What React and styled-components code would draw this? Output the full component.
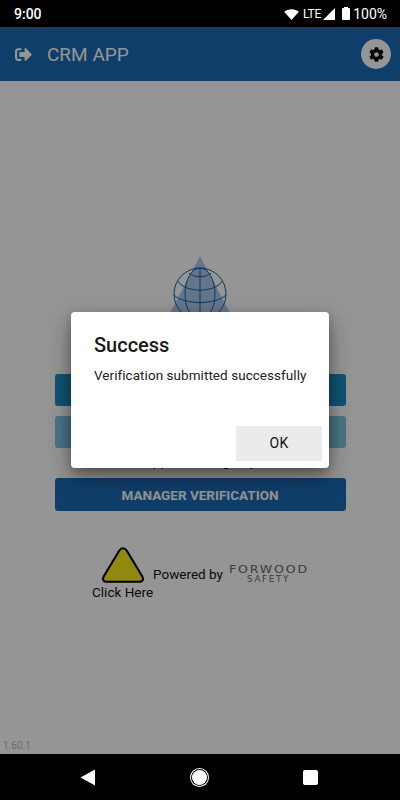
import React from "react";
import styled, { createGlobalStyle } from "styled-components";
import { FaCog, FaSignOutAlt } from "react-icons/fa";

const GlobalStyle = createGlobalStyle`
  html, body { margin: 0; padding: 0; background: #000; }
  * { box-sizing: border-box; }
  body { font-family: Roboto, "Liberation Sans", sans-serif; }
`;

export default function App() {
  return (
    <Screen>
      <GlobalStyle />
      <StatusBar>
        <Clock>9:00</Clock>
        <StatusIcons>
          <svg width="15" height="11" viewBox="0 0 16 12">
            <path d="M0 3 C4 -0.8 12 -0.8 16 3 L8 12 Z" fill="#fff" />
          </svg>
          <Lte>LTE</Lte>
          <svg width="12" height="12" viewBox="0 0 12 12">
            <path d="M12 0 V12 H0 Z" fill="#fff" />
          </svg>
          <Battery />
          <Percent>100%</Percent>
        </StatusIcons>
      </StatusBar>

      <Body>
        <Header>
          <HeaderLeft>
            <FaSignOutAlt size={17} />
            <Title>CRM APP</Title>
          </HeaderLeft>
          <GearButton>
            <FaCog size={15} />
          </GearButton>
        </Header>

        <Main>
          <Logo viewBox="-2 0 64 84">
            <path d="M30 0 L61.6 60 H-1.6 Z" fill="#aecbea" />
            <g fill="none" stroke="#0f5cb0" strokeWidth="1">
              <circle cx="30" cy="38" r="26" />
              <ellipse cx="30" cy="38" rx="15" ry="26" />
              <path d="M30 12 V64" />
              <path d="M19 17 C24 22 36 22 41 17" />
              <path d="M8 25.5 C16 37 44 37 52 25.5" />
              <path d="M4 39 C14 49 46 49 56 39" />
            </g>
          </Logo>
          <Menu>
            <MenuButton $color="#1d8fc4" />
            <MenuButton $color="#7cc6e4" />
            <MenuNote>Approved Registry</MenuNote>
            <MenuButton $color="#1b6bb8" $tall>MANAGER VERIFICATION</MenuButton>
          </Menu>
          <Footer>
            <ClickHere>
              <svg width="44" height="38" viewBox="0 0 46 39">
                <path
                  d="M23 2 C24.8 2 26 3 27 4.6 L43.2 31.5 C44.9 34.6 43.4 37 40.6 37 H5.4 C2.6 37 1.1 34.6 2.8 31.5 L19 4.6 C20 3 21.2 2 23 2 Z"
                  fill="#f7e91c"
                  stroke="#000"
                  strokeWidth="2.2"
                />
              </svg>
              <ClickLabel>Click Here</ClickLabel>
            </ClickHere>
            <Powered>Powered by</Powered>
            <Brand>
              <BrandName>FORWOOD</BrandName>
              <BrandSub>SAFETY</BrandSub>
            </Brand>
          </Footer>
          <Version>1.60.1</Version>
        </Main>

        <Overlay>
          <Dialog>
            <DialogTitle>Success</DialogTitle>
            <DialogText>Verification submitted successfully</DialogText>
            <DialogActions>
              <OkButton>OK</OkButton>
            </DialogActions>
          </Dialog>
        </Overlay>
      </Body>

      <NavBar>
        <svg width="16" height="17" viewBox="0 0 16 17">
          <path d="M15 0.5 V16.5 L0.5 8.5 Z" fill="#fff" />
        </svg>
        <HomeButton />
        <RecentButton />
      </NavBar>
    </Screen>
  );
}

const Screen = styled.div`
  width: 400px;
  height: 800px;
  display: flex;
  flex-direction: column;
  overflow: hidden;
  background: #000;
`;

const StatusBar = styled.div`
  height: 27px;
  flex: none;
  background: #000;
  color: #fff;
  display: flex;
  align-items: center;
  justify-content: space-between;
  padding: 1px 13px 0 14px;
`;

const Clock = styled.span`
  font-size: 14px;
  font-weight: 500;
`;

const StatusIcons = styled.div`
  display: flex;
  align-items: center;
`;

const Lte = styled.span`
  font-size: 12px;
  margin: 0 2px 0 4px;
  letter-spacing: -0.2px;
`;

const Battery = styled.div`
  position: relative;
  width: 8px;
  height: 12px;
  margin-left: 7px;
  background: #fff;
  border-radius: 1px;

  &::before {
    content: "";
    position: absolute;
    top: -1px;
    left: 2px;
    width: 4px;
    height: 1px;
    background: #fff;
  }
`;

const Percent = styled.span`
  font-size: 14px;
  margin-left: 3px;
`;

const Body = styled.div`
  position: relative;
  flex: 1;
  display: flex;
  flex-direction: column;
  background: #fff;
`;

const Header = styled.header`
  height: 54px;
  flex: none;
  background: #1b6bb8;
  color: #fff;
  display: flex;
  align-items: center;
  justify-content: space-between;
  padding: 0 9px 0 15px;
`;

const HeaderLeft = styled.div`
  display: flex;
  align-items: center;
  gap: 15px;
`;

const Title = styled.h1`
  margin: 0;
  font-size: 19px;
  font-weight: 400;
`;

const GearButton = styled.div`
  width: 30px;
  height: 30px;
  border-radius: 50%;
  background: #fff;
  color: #000;
  display: flex;
  align-items: center;
  justify-content: center;
`;

const Main = styled.main`
  position: relative;
  flex: 1;
  display: flex;
  flex-direction: column;
  align-items: center;
  padding-top: 175px;
`;

const Logo = styled.svg`
  width: 64px;
  height: 84px;
  flex: none;
`;

const Menu = styled.div`
  width: 291px;
  margin-top: 34px;
  display: flex;
  flex-direction: column;
  align-items: stretch;
`;

const MenuButton = styled.div`
  height: ${(p) => (p.$tall ? 33 : 32)}px;
  margin-bottom: 10px;
  background: ${(p) => p.$color};
  border-radius: 3px;
  color: #fff;
  font-size: 13.5px;
  font-weight: 700;
  display: flex;
  align-items: center;
  justify-content: center;

  &:last-child {
    margin-bottom: 0;
  }
`;

const MenuNote = styled.div`
  height: 19px;
  margin-top: -8px;
  margin-bottom: 9px;
  padding-top: 3px;
  font-size: 14px;
  line-height: 16px;
  color: #000;
  text-align: center;
`;

const Footer = styled.div`
  margin-top: 35px;
  display: flex;
  align-items: flex-start;
`;

const ClickHere = styled.div`
  display: flex;
  flex-direction: column;
  align-items: center;
`;

const ClickLabel = styled.span`
  font-size: 13.5px;
  line-height: 16px;
  color: #111;
`;

const Powered = styled.span`
  margin: 20px 0 0;
  font-size: 13.5px;
  color: #111;
`;

const Brand = styled.div`
  width: 78px;
  margin: 19px 0 0 7px;
  display: flex;
  flex-direction: column;
  align-items: center;
  color: #666;
  font-family: "DejaVu Sans", sans-serif;
`;

const BrandName = styled.span`
  font-size: 10px;
  line-height: 10px;
  letter-spacing: 1.5px;
  white-space: nowrap;
  transform: scaleX(1.25);
`;

const BrandSub = styled.span`
  font-size: 8px;
  line-height: 9px;
  letter-spacing: 1.5px;
  transform: scaleX(1.1);
`;

const Version = styled.span`
  position: absolute;
  left: 3px;
  bottom: 3px;
  font-size: 10px;
  color: #bbb;
`;

const Overlay = styled.div`
  position: absolute;
  inset: 0;
  background: rgba(0, 0, 0, 0.415);
  display: flex;
  align-items: center;
  justify-content: center;
`;

const Dialog = styled.div`
  width: 258px;
  height: 156px;
  margin-bottom: 2px;
  background: #fff;
  border-radius: 4px;
  box-shadow: 0 10px 24px rgba(0, 0, 0, 0.35), 0 4px 10px rgba(0, 0, 0, 0.25);
  padding: 22px 7px 7px 23px;
  display: flex;
  flex-direction: column;
`;

const DialogTitle = styled.h2`
  margin: 0;
  font-size: 20px;
  line-height: 23px;
  font-weight: 500;
  color: #1a1a1a;
`;

const DialogText = styled.p`
  margin: 9px 0 0;
  font-size: 13.5px;
  line-height: 18px;
  color: #222;
  letter-spacing: 0.05px;
`;

const DialogActions = styled.div`
  margin-top: auto;
  display: flex;
  justify-content: flex-end;
`;

const OkButton = styled.div`
  width: 86px;
  height: 35px;
  background: #ebebeb;
  color: #111;
  font-size: 14px;
  font-weight: 400;
  letter-spacing: 0.4px;
  border-radius: 1px;
  display: flex;
  align-items: center;
  justify-content: center;
`;

const NavBar = styled.nav`
  height: 46px;
  flex: none;
  background: #000;
  display: flex;
  align-items: center;
  padding: 0 82px 0 80px;
  justify-content: space-between;
`;

const HomeButton = styled.div`
  width: 15px;
  height: 15px;
  border-radius: 50%;
  background: #fff;
  box-shadow: 0 0 0 1px #000, 0 0 0 2px #fff;
`;

const RecentButton = styled.div`
  width: 15px;
  height: 15px;
  border-radius: 2px;
  background: #fff;
`;
